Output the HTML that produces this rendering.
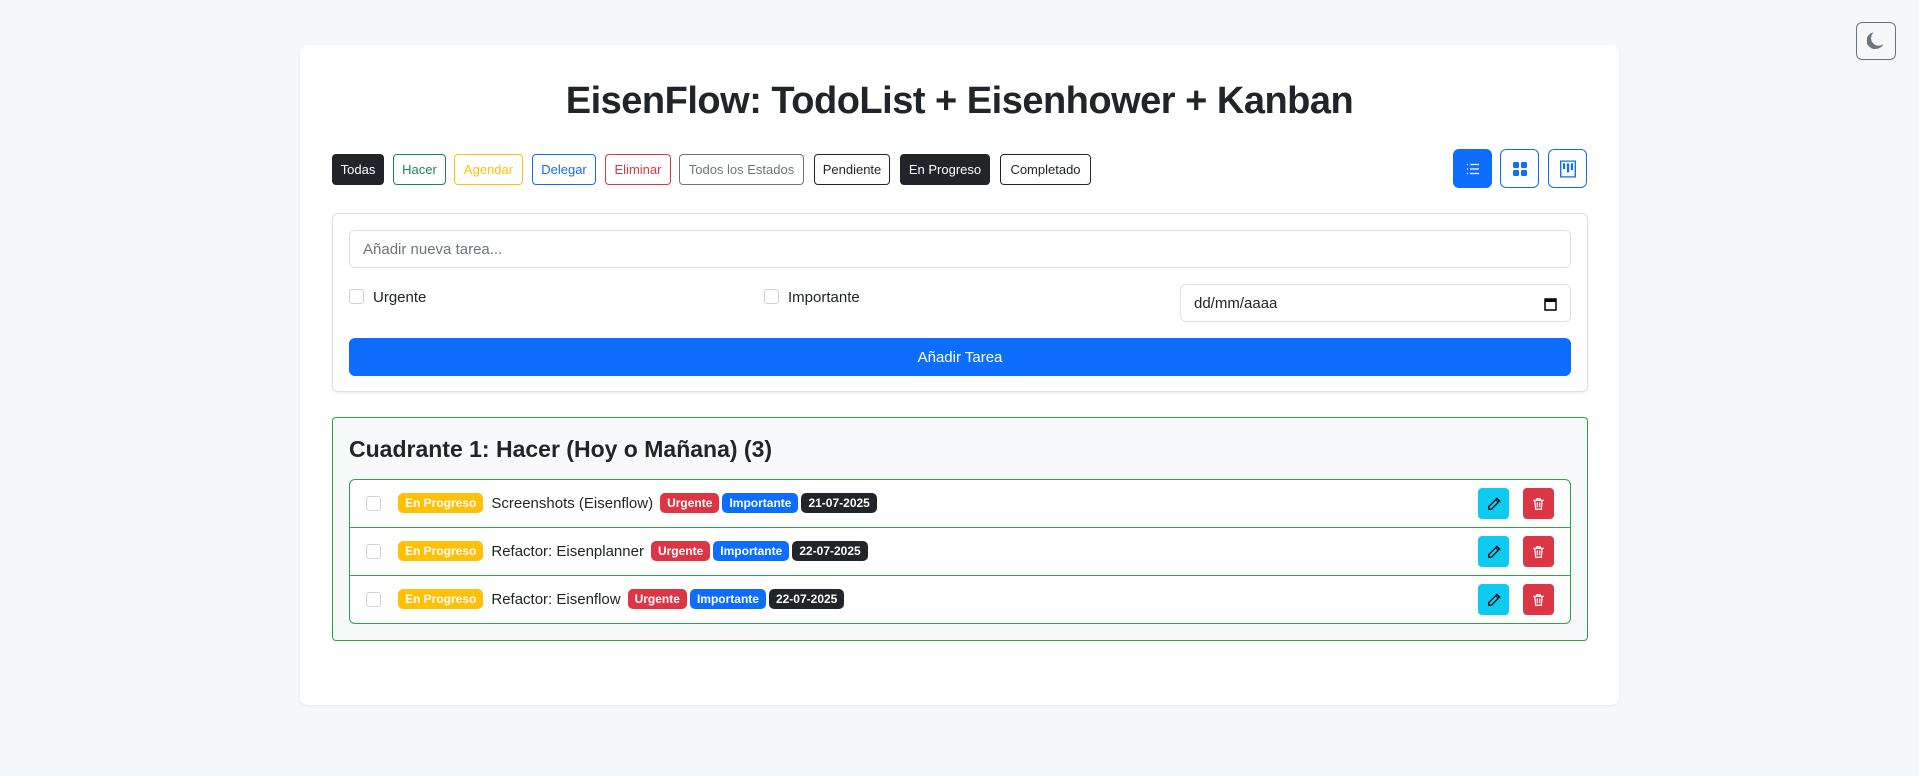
<!DOCTYPE html>
<html><head><meta charset="utf-8"><style>
*{box-sizing:border-box;margin:0;padding:0}
body{width:1919px;height:776px;background:#f6f7f9;font-family:"Liberation Sans",sans-serif;color:#212529;position:relative;overflow:hidden}
.abs{position:absolute}
.card{left:300px;top:45px;width:1319px;height:660px;background:#fff;border-radius:8px;box-shadow:0 1px 3px rgba(0,0,0,.06)}
h1{position:absolute;left:300px;width:1319px;top:80px;text-align:center;font-size:38px;font-weight:bold;letter-spacing:-0.5px}
.fb{position:absolute;top:154px;height:31px;border:1px solid;border-radius:4px;font-size:13px;display:flex;align-items:center;justify-content:center;background:#fff}
.vb{position:absolute;top:149px;width:39px;height:39px;border:1.5px solid #0d6efd;border-radius:6px;background:#fff;display:flex;align-items:center;justify-content:center}
.inp{border:1px solid #dee2e6;border-radius:6px;background:#fff;font-size:15px;color:#6c757d;display:flex;align-items:center;padding-left:13px}
.cb{width:15px;height:15px;border:1px solid #ced4da;border-radius:3px;background:#fff}
.badge{display:inline-block;font-size:12px;font-weight:bold;color:#fff;padding:3px 7px;border-radius:5px;margin-right:3px;vertical-align:middle}
.row{position:absolute;left:349px;width:1222px;height:48px;display:flex;align-items:center;font-size:15px}
.ab{position:absolute;width:31px;height:31px;border-radius:4px;display:flex;align-items:center;justify-content:center}
</style></head><body>
<div class="abs" style="left:1856px;top:22px;width:40px;height:38px;border:1px solid #6c757d;border-radius:6px;display:flex;align-items:center;justify-content:center">
<svg width="18" height="18" viewBox="0 0 16 16"><path d="M6 .3A7.2 7.2 0 0 0 8.1 15a7.2 7.2 0 0 0 6.6-4.4A6.5 6.5 0 0 1 6 .3z" fill="#6c757d"/></svg></div>
<div class="abs card"></div>
<h1>EisenFlow: TodoList + Eisenhower + Kanban</h1>
<div class="fb" style="left:332px;width:52px;background:#212529;border-color:#212529;color:#fff">Todas</div>
<div class="fb" style="left:393px;width:53px;border-color:#198754;color:#198754">Hacer</div>
<div class="fb" style="left:454px;width:69px;border-color:#ffc107;color:#ffc107">Agendar</div>
<div class="fb" style="left:532px;width:64px;border-color:#0d6efd;color:#0d6efd">Delegar</div>
<div class="fb" style="left:605px;width:66px;border-color:#dc3545;color:#dc3545">Eliminar</div>
<div class="fb" style="left:679px;width:125px;border-color:#6c757d;color:#6c757d">Todos los Estados</div>
<div class="fb" style="left:814px;width:76px;border-color:#212529;color:#212529">Pendiente</div>
<div class="fb" style="left:900px;width:90px;background:#212529;border-color:#212529;color:#fff">En Progreso</div>
<div class="fb" style="left:1000px;width:91px;border-color:#212529;color:#212529">Completado</div>
<div class="vb" style="left:1453px;background:#0d6efd"><svg width="16" height="16" viewBox="0 0 16 16" fill="none" stroke="#fff" stroke-width="1.3"><path d="M5 3.5h9M5 8h9M5 12.5h9M2 3.5h1M2 8h1M2 12.5h1"/></svg></div>
<div class="vb" style="left:1500px"><svg width="16" height="16" viewBox="0 0 16 16" fill="#0d6efd"><rect x="1" y="1" width="6" height="6" rx="1.5"/><rect x="9" y="1" width="6" height="6" rx="1.5"/><rect x="1" y="9" width="6" height="6" rx="1.5"/><rect x="9" y="9" width="6" height="6" rx="1.5"/></svg></div>
<div class="vb" style="left:1548px"><svg width="18" height="18" viewBox="0 0 16 16" fill="#0d6efd"><path d="M1.5 1h13v14h-13z" fill="none" stroke="#0d6efd" stroke-width="1.2"/><rect x="3.5" y="3" width="2" height="5"/><rect x="7" y="3" width="2" height="8"/><rect x="10.5" y="3" width="2" height="6"/></svg></div>
<div class="abs" style="left:332px;top:213px;width:1256px;height:179px;border:1px solid #dee2e6;border-radius:6px;box-shadow:0 1px 3px rgba(0,0,0,.08)"></div>
<div class="abs inp" style="left:349px;top:230px;width:1222px;height:38px">Añadir nueva tarea...</div>
<div class="abs cb" style="left:349px;top:289px"></div><div class="abs" style="left:373px;top:289px;font-size:15px">Urgente</div>
<div class="abs cb" style="left:764px;top:289px"></div><div class="abs" style="left:788px;top:289px;font-size:15px">Importante</div>
<div class="abs inp" style="left:1180px;top:284px;width:391px;height:38px;color:#212529">dd/mm/aaaa
<svg class="abs" style="right:13px;top:12px" width="13" height="14" viewBox="0 0 13 14"><rect x="1" y="2" width="11" height="11" fill="none" stroke="#000" stroke-width="1.5"/><rect x="1" y="2" width="11" height="3" fill="#000"/></svg></div>
<div class="abs" style="left:349px;top:338px;width:1222px;height:38px;background:#0d6efd;border-radius:6px;color:#fff;font-size:15px;display:flex;align-items:center;justify-content:center">Añadir Tarea</div>
<div class="abs" style="left:332px;top:417px;width:1256px;height:224px;background:#f8f9fa;border:1px solid #28a745;border-radius:4px"></div>
<div class="abs" style="left:349px;top:436px;font-size:23px;font-weight:bold;color:#212529">Cuadrante 1: Hacer (Hoy o Mañana) (3)</div>
<div class="abs" style="left:349px;top:479px;width:1222px;height:145px;border:1px solid #28a745;border-radius:6px;background:#fff"></div>
<div class="abs" style="left:350px;top:527px;width:1220px;height:1px;background:#28a745"></div>
<div class="abs" style="left:350px;top:575px;width:1220px;height:1px;background:#28a745"></div>
<div class="row" style="top:479px"><div class="cb" style="margin-left:17px;margin-right:17px"></div><span class="badge" style="background:#ffc107">En Progreso</span><span style="margin:0 7px 0 5px">Screenshots (Eisenflow)</span><span class="badge" style="background:#dc3545">Urgente</span><span class="badge" style="background:#0d6efd">Importante</span><span class="badge" style="background:#212529">21-07-2025</span></div>
<div class="row" style="top:527px"><div class="cb" style="margin-left:17px;margin-right:17px"></div><span class="badge" style="background:#ffc107">En Progreso</span><span style="margin:0 7px 0 5px">Refactor: Eisenplanner</span><span class="badge" style="background:#dc3545">Urgente</span><span class="badge" style="background:#0d6efd">Importante</span><span class="badge" style="background:#212529">22-07-2025</span></div>
<div class="row" style="top:575px"><div class="cb" style="margin-left:17px;margin-right:17px"></div><span class="badge" style="background:#ffc107">En Progreso</span><span style="margin:0 7px 0 5px">Refactor: Eisenflow</span><span class="badge" style="background:#dc3545">Urgente</span><span class="badge" style="background:#0d6efd">Importante</span><span class="badge" style="background:#212529">22-07-2025</span></div>
<div class="ab" style="left:1478px;top:488px;background:#0dcaf0"><svg width="14" height="14" viewBox="0 0 16 16" fill="none" stroke="#000" stroke-width="1.4"><path d="M11.5 1.5l3 3L5 14H2v-3z M10 3l3 3"/></svg></div>
<div class="ab" style="left:1523px;top:488px;background:#dc3545"><svg width="13" height="14" viewBox="0 0 16 16" fill="none" stroke="#fff" stroke-width="1.5"><path d="M1.5 3.5h13M6 3.5V1.5h4v2M3.5 3.5l1 11h7l1-11M6.5 6v6M9.5 6v6"/></svg></div>
<div class="ab" style="left:1478px;top:536px;background:#0dcaf0"><svg width="14" height="14" viewBox="0 0 16 16" fill="none" stroke="#000" stroke-width="1.4"><path d="M11.5 1.5l3 3L5 14H2v-3z M10 3l3 3"/></svg></div>
<div class="ab" style="left:1523px;top:536px;background:#dc3545"><svg width="13" height="14" viewBox="0 0 16 16" fill="none" stroke="#fff" stroke-width="1.5"><path d="M1.5 3.5h13M6 3.5V1.5h4v2M3.5 3.5l1 11h7l1-11M6.5 6v6M9.5 6v6"/></svg></div>
<div class="ab" style="left:1478px;top:584px;background:#0dcaf0"><svg width="14" height="14" viewBox="0 0 16 16" fill="none" stroke="#000" stroke-width="1.4"><path d="M11.5 1.5l3 3L5 14H2v-3z M10 3l3 3"/></svg></div>
<div class="ab" style="left:1523px;top:584px;background:#dc3545"><svg width="13" height="14" viewBox="0 0 16 16" fill="none" stroke="#fff" stroke-width="1.5"><path d="M1.5 3.5h13M6 3.5V1.5h4v2M3.5 3.5l1 11h7l1-11M6.5 6v6M9.5 6v6"/></svg></div>
</body></html>
